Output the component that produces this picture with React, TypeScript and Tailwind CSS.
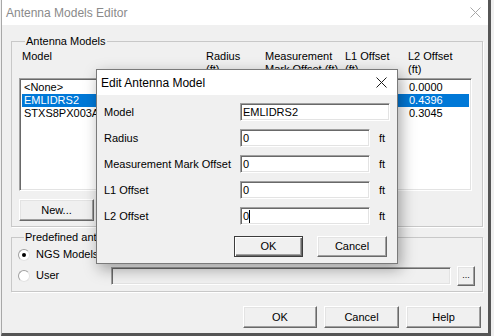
import React from 'react';

const font = { fontFamily: '"Liberation Sans", Arial, sans-serif' };

// classic raised push button
function Btn({ children, className = '', isDefault = false }: { children: React.ReactNode; className?: string; isDefault?: boolean }) {
  return (
    <div
      className={`flex items-center justify-center bg-[#f0f0f0] text-[11px] text-black border ${
        isDefault
          ? 'border-[#3c3c3c] shadow-[inset_1px_1px_0_#ffffff,inset_-1px_-1px_0_#696969,inset_-2px_-2px_0_#a0a0a0]'
          : 'border-t-white border-l-white border-r-[#696969] border-b-[#696969] shadow-[inset_-1px_-1px_0_#a0a0a0,inset_1px_1px_0_#e3e3e3]'
      } ${className}`}
    >
      {children}
    </div>
  );
}

function CloseX({ color, className = '' }: { color: string; className?: string }) {
  return (
    <svg width="11" height="11" viewBox="0 0 11 11" className={className}>
      <path d="M0.5 0.5 L10.5 10.5 M10.5 0.5 L0.5 10.5" stroke={color} strokeWidth="1" />
    </svg>
  );
}

function Radio({ checked }: { checked?: boolean }) {
  return (
    <div className="w-[12px] h-[12px] rounded-full bg-white border border-t-[#a0a0a0] border-l-[#a0a0a0] border-r-[#e3e3e3] border-b-[#e3e3e3] flex items-center justify-center">
      {checked && <div className="w-[4px] h-[4px] rounded-full bg-black" />}
    </div>
  );
}

const sunken =
  'border border-t-[#a0a0a0] border-l-[#a0a0a0] border-r-white border-b-white shadow-[inset_1px_1px_0_#696969,inset_-1px_-1px_0_#e3e3e3]';

const models = [
  { name: '<None>', l2: '0.0000' },
  { name: 'EMLIDRS2', l2: '0.4396', selected: true },
  { name: 'STXS8PX003A', l2: '0.3045' },
];

const fields = [
  { label: 'Model', value: 'EMLIDRS2', wide: true },
  { label: 'Radius', value: '0' },
  { label: 'Measurement Mark Offset', value: '0' },
  { label: 'L1 Offset', value: '0' },
  { label: 'L2 Offset', value: '0', caret: true },
];

export default function App() {
  return (
    <div className="w-[494px] h-[336px] bg-[#f0f0f0] overflow-hidden" style={font}>
      <div className="relative ml-[1px] w-[490px] h-[336px] flex flex-col border-l border-[#a8a8a8] border-r-[3px] border-r-[#555555] border-b-[3px] border-b-[#555555]">
        {/* Title bar */}
        <div className="h-[25px] bg-white flex items-center pl-[4px] pr-[7px]">
          <span className="text-[12px] text-[#8a8a8a]">Antenna Models Editor</span>
          <CloseX color="#a8a8a8" className="ml-auto" />
        </div>

        {/* Antenna Models group */}
        <fieldset className="ml-[9px] mt-[9px] w-[472px] border border-[#c8c8c8] shadow-[1px_1px_0_#ffffff] px-[7px] pb-[5px]">
          <legend className="ml-[6px] px-[1px] text-[11px] leading-[14px] text-black">Antenna Models</legend>
          <div className="pt-[2px] h-[28px] flex pl-[3px] text-[11px] leading-[13px] text-black">
            <div className="w-[184px]">Model</div>
            <div className="w-[59px]">Radius<br />(ft)</div>
            <div className="w-[80px]">Measurement<br />Mark Offset (ft)</div>
            <div className="w-[63px]">L1 Offset<br />(ft)</div>
            <div>L2 Offset<br />(ft)</div>
          </div>
          <div className={`mt-[2px] w-[453px] h-[113px] bg-white ${sunken} p-[2px] text-[11px] leading-[13px]`}>
            {models.map((m) => (
              <div
                key={m.name}
                className={`h-[13px] flex ${m.selected ? 'bg-[#0078d7] text-white' : 'text-black'}`}
              >
                <div className="w-[387px] pl-[2px]">{m.name}</div>
                <div>{m.l2}</div>
              </div>
            ))}
          </div>
          <Btn className="mt-[8px] w-[75px] h-[22px]">New...</Btn>
        </fieldset>

        {/* Predefined antenna models group */}
        <fieldset className="ml-[9px] mt-[3px] w-[472px] border border-[#c8c8c8] shadow-[1px_1px_0_#ffffff] pl-[6px] pr-[7px] pb-[5px]">
          <legend className="ml-[6px] px-[1px] text-[11px] leading-[14px] text-black">Predefined antenna models</legend>
          <div className="h-[21px] flex items-center gap-[6px] text-[11px] text-black">
            <Radio checked />
            <span>NGS Models</span>
          </div>
          <div className="h-[21px] flex items-center gap-[6px] text-[11px] text-black">
            <Radio />
            <span>User</span>
            <div className={`ml-auto w-[340px] h-[18px] bg-[#f0f0f0] ${sunken}`} />
            <Btn className="w-[18px] h-[20px] text-[#8a8a8a] !text-[9px]">...</Btn>
          </div>
        </fieldset>

        {/* Bottom buttons */}
        <div className="mt-[14px] flex justify-end gap-[7px] pr-[7px]">
          <Btn className="w-[74px] h-[22px]">OK</Btn>
          <Btn className="w-[75px] h-[22px]">Cancel</Btn>
          <Btn className="w-[75px] h-[22px]">Help</Btn>
        </div>

        {/* Edit Antenna Model dialog (overlay) */}
        <div className="absolute left-[94px] top-[69px] w-[302px] h-[195px] flex flex-col bg-[#f0f0f0] border border-[#7a7a7a] shadow-[3px_5px_14px_rgba(0,0,0,0.35)]">
          <div className="h-[25px] bg-white flex items-center pl-[4px] pr-[10px]">
            <span className="text-[12px] text-black">Edit Antenna Model</span>
            <CloseX color="#1a1a1a" className="ml-auto" />
          </div>
          <div className="pt-[4px] pl-[7px]">
            {fields.map((f) => (
              <div key={f.label} className="h-[26px] flex items-center text-[11px] text-black">
                <div className="w-[136px]">{f.label}</div>
                <div className={`${f.wide ? 'w-[150px]' : 'w-[130px]'} h-[18px] bg-white ${sunken} flex items-center pl-[2px]`}>
                  {f.value}
                  {f.caret && <span className="inline-block w-[1px] h-[13px] bg-black" />}
                </div>
                {!f.wide && <span className="ml-[9px]">ft</span>}
              </div>
            ))}
          </div>
          <div className="mt-[7px] flex justify-end gap-[14px] pr-[10px]">
            <Btn isDefault className="w-[69px] h-[21px]">OK</Btn>
            <Btn className="w-[70px] h-[21px]">Cancel</Btn>
          </div>
        </div>
      </div>
    </div>
  );
}
